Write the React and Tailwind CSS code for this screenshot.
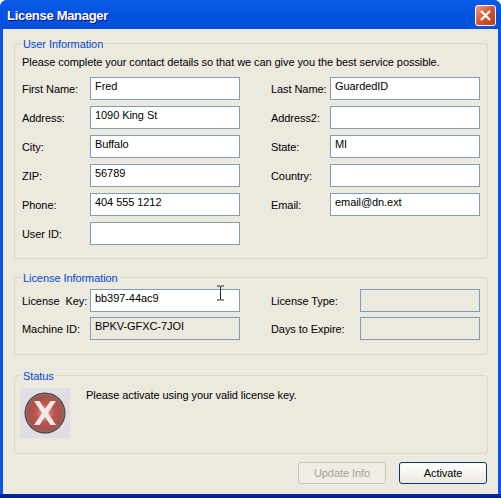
import React from "react";

const Field = ({ label, value, labelWidth = "w-[68px]", inputWidth = "w-[150px]", disabled }) => (
  <div className="flex items-center h-[23px]">
    <span className={`${labelWidth} shrink-0 pt-[2px] whitespace-pre`}>{label}</span>
    <input
      readOnly
      value={value || ""}
      className={`${inputWidth} h-[23px] border border-[#7f9db9] px-[4px] pb-[5px] text-black outline-none ${
        disabled ? "bg-[#ece9df]" : "bg-white"
      }`}
    />
  </div>
);

const Group = ({ title, className, children }) => (
  <div className={`relative border border-[#d8d6c4] rounded-[4px] ${className}`}>
    <span className="absolute left-[6px] top-[-6px] bg-[#ece9df] px-[2px] leading-[13px] text-[#0046d5]">
      {title}
    </span>
    {children}
  </div>
);

const ErrorIcon = () => (
  <div className="w-[50px] h-[50px] bg-[#e0dee5] flex items-center justify-center shrink-0">
    <svg width="42" height="42" viewBox="0 0 42 42">
      <defs>
        <radialGradient id="ball" cx="50%" cy="50%" r="50%">
          <stop offset="0%" stopColor="#e0a8a2" />
          <stop offset="45%" stopColor="#bd5550" />
          <stop offset="80%" stopColor="#a8504c" />
          <stop offset="92%" stopColor="#8a6a62" />
          <stop offset="100%" stopColor="#3a2a26" />
        </radialGradient>
      </defs>
      <circle cx="21" cy="21" r="20.5" fill="url(#ball)" />
      <path className="blur-[0.4px]" d="M10 9h5.500l5.500 8 5.500-8h5.500l-8 12 8 12h-5.500l-5.500-8-5.500 8h-5.500l8-12z" fill="#f4e8e6" />
    </svg>
  </div>
);

const App = () => {
  return (
    <div
      className="relative w-[501px] h-[498px] flex flex-col rounded-t-[7px] bg-[#0a56e0] overflow-hidden text-[11px] tracking-[-0.07px] text-black"
      style={{ fontFamily: '"Liberation Sans", sans-serif' }}
    >
      <div className="h-[29px] shrink-0 flex items-center justify-between pl-[7px] pr-[5px] pt-[2px] bg-gradient-to-b from-[#0a5be8] via-[#0453e0] to-[#0550dc]">
        <span className="text-[13px] font-bold tracking-[-0.3px] text-white [text-shadow:1px_1px_#0f1089]">License Manager</span>
        <div className="w-[21px] h-[21px] rounded-[3px] border border-white bg-gradient-to-br from-[#e8a08a] via-[#d8532f] to-[#b83a1c] flex items-center justify-center">
          <svg width="13" height="13" viewBox="0 0 13 13">
            <path d="M2 2l9 9M11 2l-9 9" stroke="#fff" strokeWidth="2.4" />
          </svg>
        </div>
      </div>

      <div className="flex-1 mx-[3px] bg-[#ece9df] pl-[11px] pr-[10px] pt-[14px]">
        <Group title="User Information" className="h-[216px] pl-[7px] pt-[11px]">
          <p className="leading-[15px] mb-[7px]">
            Please complete your contact details so that we can give you the best service possible.
          </p>
          <div className="grid grid-cols-[218px_209px] gap-x-[31px] gap-y-[6px]">
            <Field label="First Name:" value="Fred" />
            <Field label="Last Name:" value="GuardedID" labelWidth="w-[59px]" />
            <Field label="Address:" value="1090 King St" />
            <Field label="Address2:" labelWidth="w-[59px]" />
            <Field label="City:" value="Buffalo" />
            <Field label="State:" value="MI" labelWidth="w-[59px]" />
            <Field label="ZIP:" value="56789" />
            <Field label="Country:" labelWidth="w-[59px]" />
            <Field label="Phone:" value="404 555 1212" />
            <Field label="Email:" value="email@dn.ext" labelWidth="w-[59px]" />
            <Field label="User ID:" />
          </div>
        </Group>

        <Group title="License Information" className="h-[78px] mt-[18px] pl-[7px] pt-[11px]">
          <div className="grid grid-cols-[218px_209px] gap-x-[31px] gap-y-[5px]">
            <Field label="License  Key:" value="bb397-44ac9" />
            <Field label="License Type:" labelWidth="w-[89px]" inputWidth="w-[120px]" disabled />
            <Field label="Machine ID:" value="BPKV-GFXC-7JOI" disabled />
            <Field label="Days to Expire:" labelWidth="w-[89px]" inputWidth="w-[120px]" disabled />
          </div>
        </Group>

        <Group title="Status" className="h-[79px] mt-[20px] pl-[5px] pt-[12px]">
          <div className="flex gap-[16px]">
            <ErrorIcon />
            <span className="pt-[1px] leading-[13px]">Please activate using your valid license key.</span>
          </div>
        </Group>

        <div className="flex justify-end gap-[13px] mt-[8px] pr-[1px]">
          <button className="w-[88px] h-[22px] rounded-[3px] border border-[#cac8bb] bg-[#f0eee4] text-[#a5a397]">
            Update Info
          </button>
          <button className="w-[88px] h-[22px] rounded-[3px] border border-[#003c74] bg-gradient-to-b from-white to-[#ece9e0]">
            Activate
          </button>
        </div>
      </div>

      <div className="h-[4px] shrink-0 bg-[#00249c]" />

      {/* text cursor sitting over the license key box */}
      <svg className="absolute left-[216px] top-[285px]" width="9" height="16" viewBox="0 0 9 16">
        <path d="M1 1h3l.5.5L5 1h3M4.500 1.500v13M1 15h3l.5-.5.5.5h3" fill="none" stroke="#222" />
      </svg>
    </div>
  );
};

export default App;
